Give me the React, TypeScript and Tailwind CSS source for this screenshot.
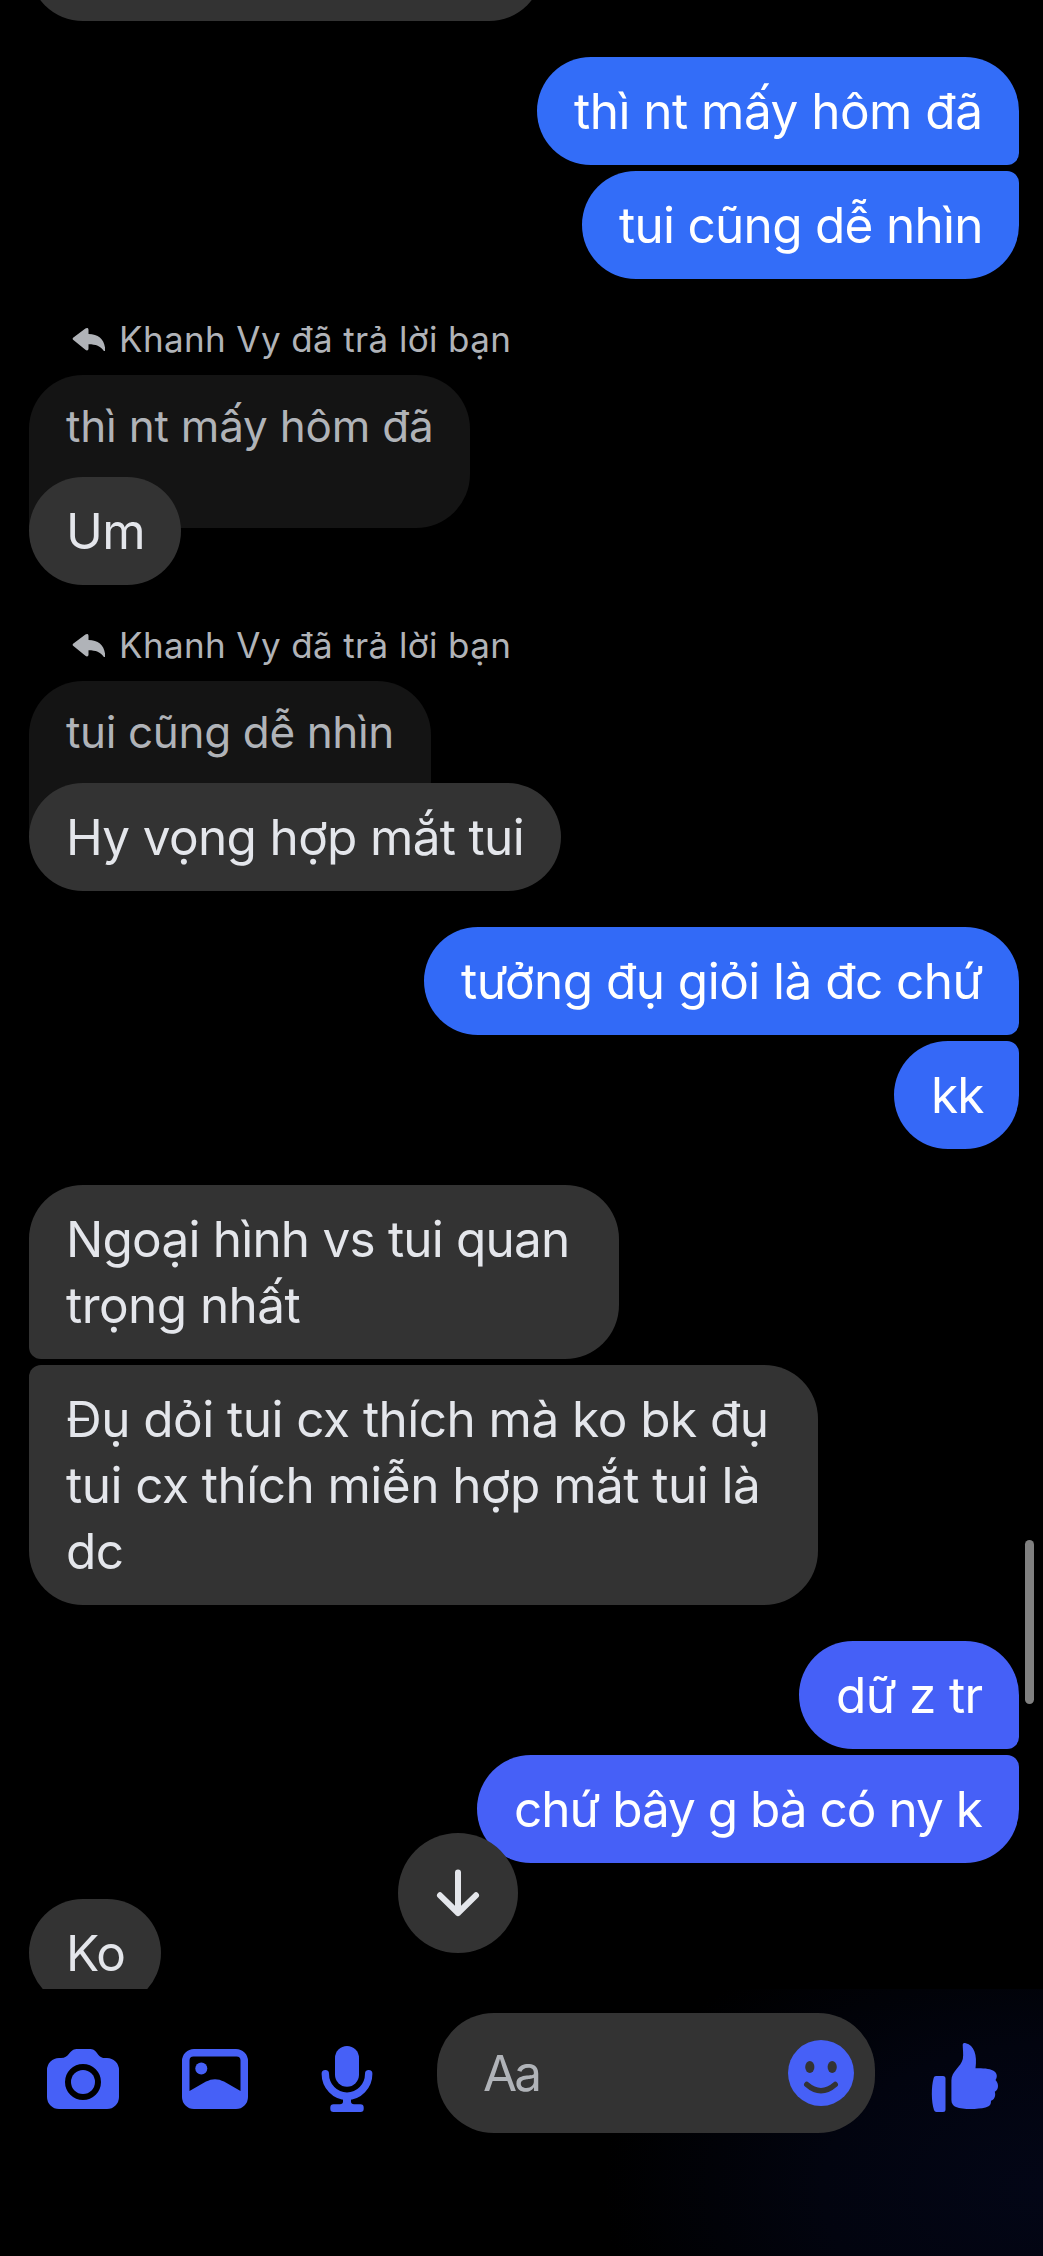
import type { ReactNode } from "react";

function Sent({ children, className }: { children: ReactNode; className: string }) {
  return (
    <div className={`self-end rounded-[54px] py-[21px] pl-[37px] whitespace-nowrap text-white ${className}`}>
      {children}
    </div>
  );
}

function Received({ children, className }: { children: ReactNode; className: string }) {
  return (
    <div className={`self-start rounded-[54px] bg-[#333333] py-[21px] pl-[37px] whitespace-nowrap text-[#e4e6eb] ${className}`}>
      {children}
    </div>
  );
}

function Quoted({ children, className }: { children: ReactNode; className: string }) {
  return (
    <div className="flex flex-col items-start">
      <div className="ml-[43px] flex h-12 items-center gap-[14px] text-[35px] leading-[48px] tracking-[0.38px] whitespace-nowrap text-[#b0b3b8]">
        <svg width="33" height="24" viewBox="0 0 33 24" fill="#b0b3b8">
          <path d="M1.4 10.5 13.4 1.6C15 .5 16.5 1 16.5 3V7C27 7 33 12.8 33.2 23.2 33.2 24.4 32.1 24.6 31.5 23.6 28.5 19 24 17.3 16.5 17.2V21.5C16.5 23.4 15 24 13.4 22.8L1.4 13C.4 12.2.4 11.3 1.4 10.5Z" />
        </svg>
        <span>Khanh Vy đã trả lời bạn</span>
      </div>
      <div className={`mt-3 h-[153px] rounded-[54px] rounded-bl-none bg-[#141414] pt-[21px] pl-[37px] text-[44px] leading-[60px] whitespace-nowrap text-[#b0b3b8] ${className}`}>
        {children}
      </div>
    </div>
  );
}

function CameraIcon() {
  return (
    <svg width="72" height="72" viewBox="0 0 72 72" fill="#4660f7">
      <path
        fillRule="evenodd"
        d="M12 15h2c4 0 6-1.500 8-4.200C25 7.200 26.500 6 31 6h11c4.500 0 6 1.200 8.500 4.800C52.500 13.500 54 15 58 15h2a12 12 0 0 1 12 12v27a12 12 0 0 1-12 12H12A12 12 0 0 1 0 54V27a12 12 0 0 1 12-12ZM36 21a18 18 0 1 0 0 36 18 18 0 0 0 0-36Z"
      />
      <circle cx="36" cy="39" r="12" />
    </svg>
  );
}

function PhotoIcon() {
  return (
    <svg width="72" height="72" viewBox="0 0 72 72" fill="#4660f7">
      <path
        fillRule="evenodd"
        d="M15 6h42a12 12 0 0 1 12 12v36a12 12 0 0 1-12 12H15A12 12 0 0 1 3 54V18A12 12 0 0 1 15 6Zm-.5 7.500a4 4 0 0 0-4 4V48L27 38.600C33 35.300 39 35.300 45 38.600L61.500 48V17.500a4 4 0 0 0-4-4Z"
      />
      <circle cx="22.300" cy="25.500" r="6" />
    </svg>
  );
}

function MicIcon() {
  return (
    <svg width="72" height="72" viewBox="0 0 72 72" fill="#4660f7">
      <rect x="24" y="3" width="24" height="40.700" rx="12" />
      <path d="M14.300 30.700a21.700 22.500 0 0 0 43.400 0" fill="none" stroke="#4660f7" strokeWidth="7.400" strokeLinecap="round" />
      <path d="M32 55h8v3.500c0 1.800 1 2.800 3 2.800h6.500a3.300 3.300 0 0 1 3.200 3.200v1.200A3.300 3.300 0 0 1 49.500 69h-27a3.300 3.300 0 0 1-3.200-3.300v-1.200a3.300 3.300 0 0 1 3.200-3.200H29c2 0 3-1 3-2.800Z" />
    </svg>
  );
}

function LikeIcon() {
  return (
    <svg className="overflow-visible" width="72" height="72" viewBox="0 0 72 72" fill="#4660f7">
      <path d="M7 33h7a2.500 2.500 0 0 1 2.500 2.500v31A2.500 2.500 0 0 1 14 69H7.500c-1.200 0-2-.8-2.500-2-2.800-8.500-2.800-23.500-.4-31.800C5 33.800 5.800 33 7 33Z" />
      <path d="M33.700 1.800C33.900.2 35 -.3 36.800.2 45 2 48.500 12 46.500 25.200 54 25.200 60 25.200 64.500 27.800 68.500 30 68.500 34.500 66.500 37 70 40.500 70 46.500 65.800 48.800 67 53 65.500 56.500 62 57.800 62 62 60.500 63.500 56.500 64.500 48 66.500 34 66.700 27 64 24 62.800 22.400 60.500 22.400 57V37.500C22.400 28 32 24 33.800 16 34.700 11.500 33.700 6.500 33.700 1.800Z" />
    </svg>
  );
}

function SmileIcon() {
  return (
    <svg width="66" height="66" viewBox="0 0 66 66">
      <circle cx="33" cy="33" r="33" fill="#4660f7" />
      <ellipse cx="21.800" cy="27" rx="4.600" ry="6" fill="#333333" />
      <ellipse cx="44.200" cy="27" rx="4.600" ry="6" fill="#333333" />
      <path d="M18.800 44.500Q33 57 47.200 44.500" fill="none" stroke="#333333" strokeWidth="5.500" strokeLinecap="round" />
    </svg>
  );
}

export default function App() {
  return (
    <div className="relative flex h-[2256px] w-[1043px] flex-col overflow-hidden bg-black font-['Inter','Noto_Sans',sans-serif] text-[49.5px] leading-[66px]">
      <main className="flex h-[1989px] shrink-0 flex-col gap-9 overflow-hidden pr-6 pl-[29px]">
        <div className="-mt-[87px] h-[108px] w-[514px] shrink-0 rounded-[54px] bg-[#333333]" />

        <div className="flex flex-col gap-1.5">
          <Sent className="w-[482px] rounded-br-[12px] bg-[#336df8] tracking-[-0.52px]">thì nt mấy hôm đã</Sent>
          <Sent className="w-[437px] rounded-tr-[12px] bg-[#336df8] tracking-[-0.72px]">tui cũng dễ nhìn</Sent>
        </div>

        <div className="flex flex-col">
          <Quoted className="w-[441px] tracking-[-0.2px]">thì nt mấy hôm đã</Quoted>
          <Received className="z-10 -mt-[51px] w-[152px] tracking-[-0.6px]">Um</Received>
        </div>

        <div className="flex flex-col">
          <Quoted className="w-[402px] tracking-[-0.35px]">tui cũng dễ nhìn</Quoted>
          <Received className="z-10 -mt-[51px] w-[532px] tracking-[-0.66px]">Hy vọng hợp mắt tui</Received>
        </div>

        <div className="flex flex-col gap-1.5">
          <Sent className="w-[595px] rounded-br-[12px] bg-[#326af7] tracking-[-0.54px]">tưởng đụ giỏi là đc chứ</Sent>
          <Sent className="w-[125px] rounded-tr-[12px] bg-[#3568f7] tracking-[-1px]">kk</Sent>
        </div>

        <div className="flex flex-col gap-1.5">
          <Received className="w-[590px] rounded-bl-[12px] tracking-[-0.8px]">
            Ngoại hình vs tui quan
            <br />
            <span className="tracking-[-0.55px]">trọng nhất</span>
          </Received>
          <Received className="w-[789px] rounded-tl-[12px] tracking-[-0.53px]">
            Đụ dỏi tui cx thích mà ko bk đụ
            <br />
            tui cx thích miễn hợp mắt tui là
            <br />
            dc
          </Received>
        </div>

        <div className="flex flex-col gap-1.5">
          <Sent className="w-[220px] rounded-br-[12px] bg-[#4560f7] tracking-[-0.65px]">dữ z tr</Sent>
          <Sent className="w-[542px] rounded-tr-[12px] bg-[#4660f7] tracking-[-1px]">chứ bây g bà có ny k</Sent>
        </div>

        <Received className="w-[132px] tracking-[-1px]">Ko</Received>
      </main>

      <footer className="h-[267px] bg-[radial-gradient(ellipse_440px_290px_at_100%_75%,#030616_0%,#02040f_50%,#000000_100%)] pt-6">
        <div className="flex h-[120px] items-center pl-[47px]">
          <div className="flex gap-[60px] pt-3">
            <CameraIcon />
            <PhotoIcon />
            <MicIcon />
          </div>
          <div className="ml-[54px] flex h-[120px] w-[438px] items-center justify-between rounded-[57px] bg-[#333333] pr-[21px] pl-[46px]">
            <span className="tracking-[-3px] text-[#b0b3b8]">Aa</span>
            <SmileIcon />
          </div>
          <div className="ml-[54px] pt-3">
            <LikeIcon />
          </div>
        </div>
      </footer>

      {/* Scroll indicator */}
      <div className="absolute top-[1540px] right-[9px] h-[164px] w-[9px] rounded-full bg-[#808080]" />

      {/* Jump to the latest message */}
      <div className="absolute top-[1833px] left-[398px] z-20 flex size-[120px] items-center justify-center rounded-full bg-[#333333]">
        <svg width="60" height="60" viewBox="-30 -30 60 60" fill="none" stroke="#e4e6eb" strokeWidth="6" strokeLinecap="round" strokeLinejoin="round">
          <path d="M0-20.500V20M-18 2.300 0 20 18 2.300" />
        </svg>
      </div>
    </div>
  );
}
